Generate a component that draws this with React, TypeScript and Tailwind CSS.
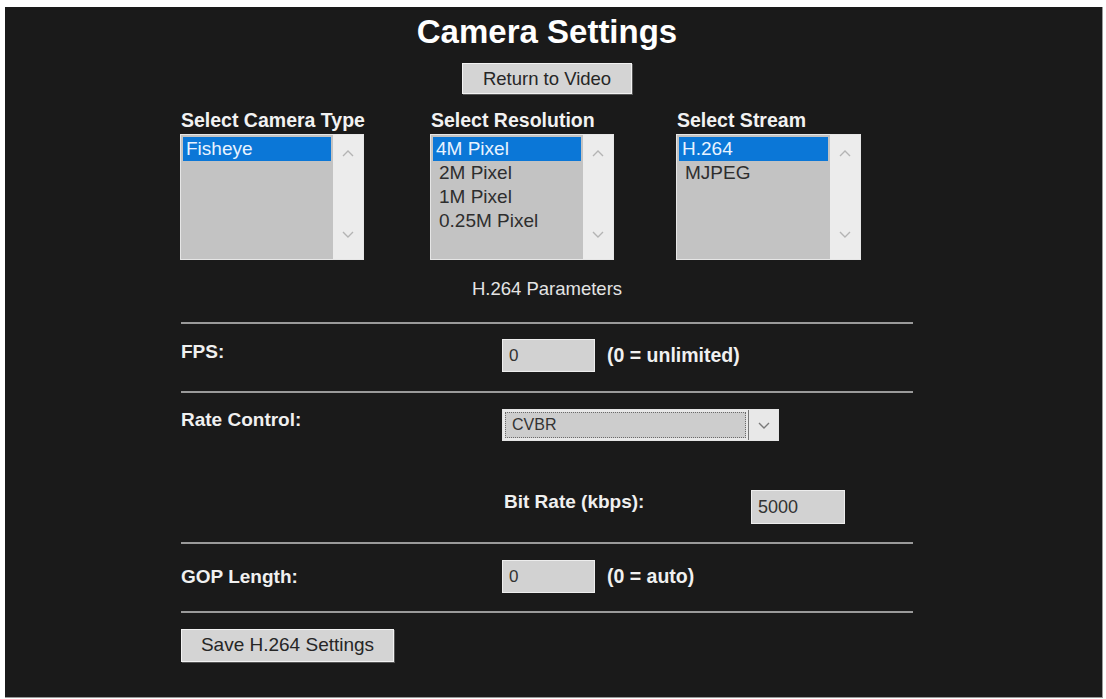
import { ReactNode } from "react";

const font = { fontFamily: '"Liberation Sans", Arial, sans-serif' };

const Chevron = ({ down = false, className = "" }: { down?: boolean; className?: string }) => (
  <svg width="12" height="7" viewBox="0 0 12 7" className={className}>
    <path
      d={down ? "M1 1 L6 6 L11 1" : "M1 6 L6 1 L11 6"}
      fill="none"
      stroke="currentColor"
      strokeWidth="1.4"
    />
  </svg>
);

const ListBox = ({ items, selected }: { items: string[]; selected: number }) => (
  <div className="flex h-[126px] border border-[#e6e6e6] bg-[#c3c3c3]">
    <div className="flex-1 p-[2px]">
      {items.map((item, i) => (
        <div
          key={item}
          className={
            i === selected
              ? "h-[24px] bg-[#0b77d7] px-[3px] text-[19px] leading-[24px] text-[#e8f3ff]"
              : "h-[24px] px-[6px] text-[19px] leading-[24px] text-[#2e2e2e]"
          }
        >
          {item}
        </div>
      ))}
    </div>
    <div className="flex w-[30px] flex-col items-center justify-between bg-[#ececec] pt-[15px] pb-[21px] text-[#b4b4b4]">
      <Chevron />
      <Chevron down />
    </div>
  </div>
);

const Column = ({ title, children, className = "" }: { title: string; children: ReactNode; className?: string }) => (
  <div className={`w-[184px] ${className}`}>
    <div className="whitespace-nowrap pl-[1px] text-[19.5px] font-bold leading-[22px] text-[#f2f2f2]">{title}</div>
    <div className="mt-[3px]">{children}</div>
  </div>
);

const TextBox = ({ value, className = "" }: { value: string; className?: string }) => (
  <div
    className={`flex items-center border border-[#ededed] bg-[#d2d2d2] pl-[6px] text-[17px] text-[#333] ${className}`}
  >
    {value}
  </div>
);

const Rule = ({ className = "" }: { className?: string }) => (
  <div className={`h-[2px] bg-[#9a9a9a] ${className}`} />
);

const GrayButton = ({ label, className = "" }: { label: string; className?: string }) => (
  <button
    className={`border border-[#f2f2f2] bg-[#d4d4d4] text-[#262626] shadow-[1px_1px_0_#555] ${className}`}
  >
    {label}
  </button>
);

const labelCls = "text-[19px] font-bold leading-[22px] text-[#f0f0f0]";

export default function App() {
  return (
    <div className="min-h-screen bg-white pt-[7px] pl-[5px]" style={font}>
      <div className="h-[691px] w-[1098px] border-r border-b border-[#9a9a9a] bg-[#1a1a1a]">
        <div className="ml-[176px] w-[732px] pt-[6px]">
          <h1 className="text-center text-[33px] font-bold leading-[38px] text-white">Camera Settings</h1>
          <GrayButton label="Return to Video" className="mx-auto mt-[12px] block h-[31px] w-[170px] text-[18.5px]" />

          {/* source pickers */}
          <div className="mt-[15px] -ml-[1px] flex">
            <Column title="Select Camera Type">
              <ListBox items={["Fisheye"]} selected={0} />
            </Column>
            <Column title="Select Resolution" className="ml-[66px]">
              <ListBox items={["4M Pixel", "2M Pixel", "1M Pixel", "0.25M Pixel"]} selected={0} />
            </Column>
            <Column title="Select Stream" className="ml-[62px] w-[185px]">
              <ListBox items={["H.264", "MJPEG"]} selected={0} />
            </Column>
          </div>

          <div className="mt-[19px] text-center text-[18.5px] leading-[20px] text-[#e4e4e4]">H.264 Parameters</div>

          <Rule className="mt-[23px]" />

          <div className="mt-[15px] flex items-start">
            <div className={`mt-[2px] w-[321px] ${labelCls}`}>FPS:</div>
            <TextBox value="0" className="h-[33px] w-[93px]" />
            <div className="ml-[12px] text-[19.5px] font-bold leading-[33px] text-[#f0f0f0]">(0 = unlimited)</div>
          </div>

          <Rule className="mt-[19px]" />

          <div className="mt-[16px] flex items-start">
            <div className={`w-[321px] ${labelCls}`}>Rate Control:</div>
            <div className="flex h-[32px] w-[277px] border border-[#e4e4e4] bg-[#e8e8e8]">
              <div className="m-[2px] flex flex-1 items-center border border-dotted border-[#6a6a6a] bg-[#cdcdcd] pl-[6px] text-[16px] text-[#333]">
                CVBR
              </div>
              <div className="flex w-[30px] items-center justify-center border-l border-[#777] text-[#7a7a7a]">
                <Chevron down />
              </div>
            </div>
          </div>

          <div className="mt-[49px] flex items-start pl-[323px]">
            <div className={`mt-[1px] w-[247px] ${labelCls}`}>Bit Rate (kbps):</div>
            <TextBox value="5000" className="h-[34px] w-[94px] text-[18px]" />
          </div>

          <Rule className="mt-[18px]" />

          <div className="mt-[16px] flex items-center">
            <div className={`w-[321px] ${labelCls}`}>GOP Length:</div>
            <TextBox value="0" className="h-[33px] w-[93px]" />
            <div className="ml-[12px] text-[19.5px] font-bold leading-[33px] text-[#f0f0f0]">(0 = auto)</div>
          </div>

          <Rule className="mt-[18px]" />

          <GrayButton label="Save H.264 Settings" className="mt-[16px] block h-[33px] w-[213px] text-[19px]" />
        </div>
      </div>
    </div>
  );
}
